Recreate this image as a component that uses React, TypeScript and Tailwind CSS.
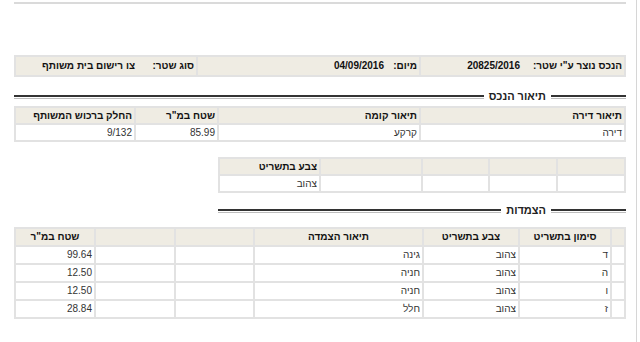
import React from "react";

function SectionTitle({ title }: { title: string }) {
  return (
    <div className="flex items-center">
      <div className="w-[75px] h-[4px] box-border border-t-2 border-t-[#333] border-b border-b-[#bdbdbd]" />
      <div className="px-[5px] text-[11px] font-bold text-[#222] leading-none whitespace-nowrap">{title}</div>
      <div className="flex-1 h-[4px] box-border border-t-2 border-t-[#333] border-b border-b-[#bdbdbd]" />
    </div>
  );
}

const th = "border-2 border-[#e2e2e2] bg-[#efece3] h-[17px] px-[2px] font-bold text-[#111] text-right whitespace-nowrap";
const td = "border-2 border-[#e2e2e2] bg-white h-[17px] px-[2px] text-[#333] text-right whitespace-nowrap";
const th4 = "border-2 border-[#e2e2e2] bg-[#efece3] h-[18px] px-[2px] font-bold text-[#111] text-center whitespace-nowrap";
const td4 = "border-2 border-[#e2e2e2] bg-white h-[18px] px-[2px] text-[#333] text-right whitespace-nowrap";
const hc = "border-2 border-[#e2e2e2] bg-[#efece3] h-[20px] p-0 font-bold text-[#111] whitespace-nowrap";

export default function App() {
  const rows = [
    ["ד", "צהוב", "גינה", "99.64"],
    ["ה", "צהוב", "חניה", "12.50"],
    ["ו", "צהוב", "חניה", "12.50"],
    ["ז", "צהוב", "חלל", "28.84"],
  ];
  return (
    <div className="relative w-[640px] h-[342px] bg-white overflow-hidden" style={{ fontFamily: '"Liberation Sans", Arial, sans-serif' }}>
      <div className="absolute right-[3px] top-0 bottom-0 w-px bg-[#d6d6d6]" />
      <div dir="rtl" className="w-[612px] ml-[14px] flex flex-col text-[10px] leading-none">
        <div className="h-[2px] mt-[2px] bg-[#dadada]" />
        {/* header info */}
        <table className="mt-[51px] w-full table-fixed border-collapse">
          <colgroup>
            <col className="w-[205px]" />
            <col className="w-[223px]" />
            <col />
          </colgroup>
          <tbody>
            <tr>
              <td className={hc}>
                <div className="flex">
                  <div className="w-[104px] pr-[2px] text-right">הנכס נוצר ע"י שטר:</div>
                  <div className="flex-1 text-right">20825/2016</div>
                </div>
              </td>
              <td className={hc}>
                <div className="flex">
                  <div className="w-[35px] pr-[2px] text-right">מיום:</div>
                  <div className="flex-1 text-right">04/09/2016</div>
                </div>
              </td>
              <td className={hc}>
                <div className="flex">
                  <div className="w-[61px] pr-[2px] text-right">סוג שטר:</div>
                  <div className="flex-1 text-right">צו רישום בית משותף</div>
                </div>
              </td>
            </tr>
          </tbody>
        </table>

        <div className="mt-[14px]">
          <SectionTitle title="תיאור הנכס" />
        </div>

        {/* table 2 */}
        <table className="mt-[4px] w-full table-fixed border-collapse">
          <colgroup>
            <col className="w-[205px]" />
            <col className="w-[202px]" />
            <col className="w-[83px]" />
            <col />
          </colgroup>
          <tbody>
            <tr>
              <td className={th}>תיאור דירה</td>
              <td className={th}>תיאור קומה</td>
              <td className={th}>שטח במ"ר</td>
              <td className={th}>החלק ברכוש המשותף</td>
            </tr>
            <tr>
              <td className={td}>דירה</td>
              <td className={td}>קרקע</td>
              <td className={td}>85.99</td>
              <td className={td}>9/132</td>
            </tr>
          </tbody>
        </table>

        {/* table 3 */}
        <table className="mt-[15px] w-[408px] table-fixed border-collapse">
          <colgroup>
            <col className="w-[68px]" />
            <col className="w-[68px]" />
            <col className="w-[67px]" />
            <col className="w-[102px]" />
            <col />
          </colgroup>
          <tbody>
            <tr>
              <td className={th}></td>
              <td className={th}></td>
              <td className={th}></td>
              <td className={th}></td>
              <td className={th}>צבע בתשריט</td>
            </tr>
            <tr>
              <td className={td}></td>
              <td className={td}></td>
              <td className={td}></td>
              <td className={td}></td>
              <td className={td}>צהוב</td>
            </tr>
          </tbody>
        </table>

        <div className="mt-[12px] w-[408px]">
          <SectionTitle title="הצמדות" />
        </div>

        {/* table 4 */}
        <table className="mt-[11px] w-full table-fixed border-collapse">
          <colgroup>
            <col className="w-[14px]" />
            <col className="w-[92px]" />
            <col className="w-[96px]" />
            <col className="w-[169px]" />
            <col className="w-[79px]" />
            <col className="w-[80px]" />
            <col />
          </colgroup>
          <tbody>
            <tr>
              <td className={th4}></td>
              <td className={th4}>סימון בתשריט</td>
              <td className={th4}>צבע בתשריט</td>
              <td className={th4}>תיאור הצמדה</td>
              <td className={th4}></td>
              <td className={th4}></td>
              <td className={th4}>שטח במ"ר</td>
            </tr>
            {rows.map((r, i) => (
              <tr key={i}>
                <td className={td4}></td>
                <td className={td4}>{r[0]}</td>
                <td className={td4}>{r[1]}</td>
                <td className={td4}>{r[2]}</td>
                <td className={td4}></td>
                <td className={td4}></td>
                <td className={td4}>{r[3]}</td>
              </tr>
            ))}
          </tbody>
        </table>
      </div>
    </div>
  );
}
